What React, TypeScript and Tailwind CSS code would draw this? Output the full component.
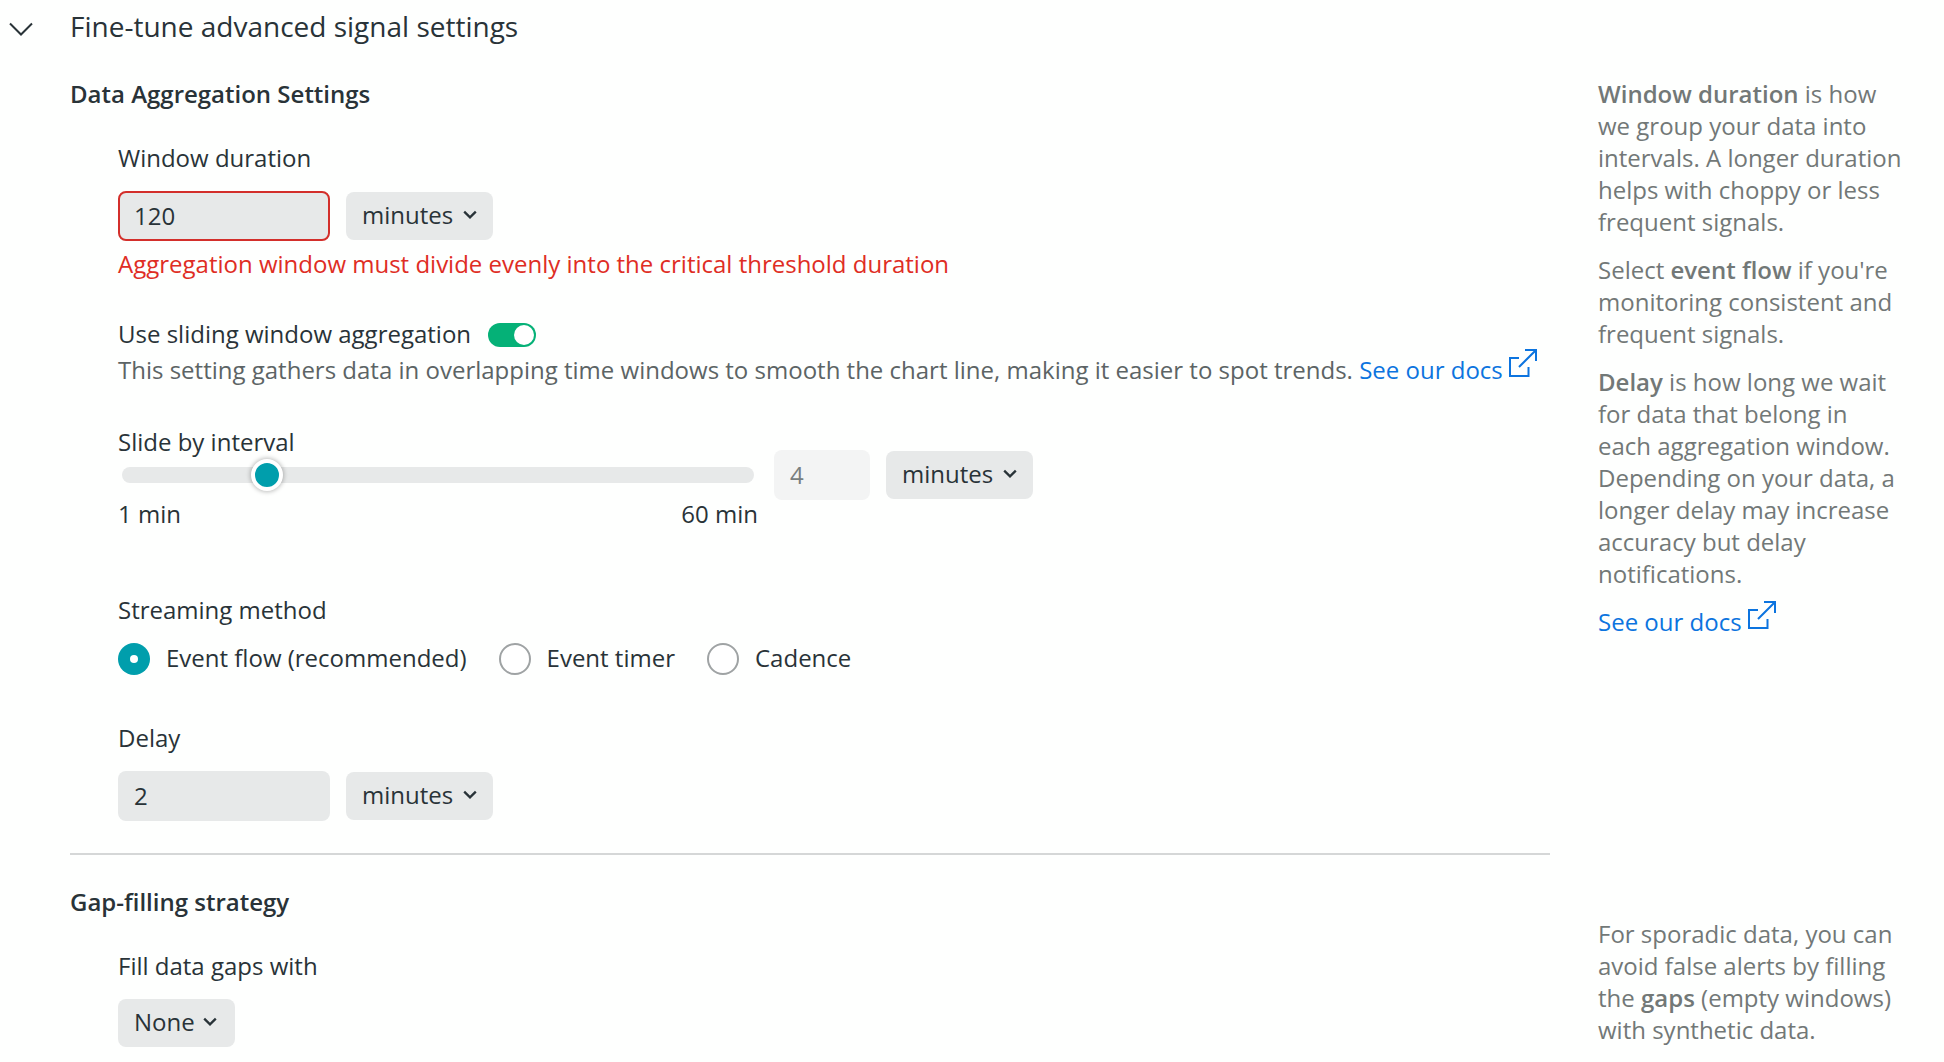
import type { ReactNode } from "react";

function Chevron() {
  return (
    <svg className="block h-[10px] w-[14px] shrink-0" viewBox="0 0 14 10" fill="none">
      <path d="M1.2 1.6L7 7.4L12.8 1.6" stroke="#293338" strokeWidth="2.3" />
    </svg>
  );
}

function Select({ label, size }: { label: string; size: string }) {
  return (
    <button className={`flex h-12 items-center justify-between rounded-lg bg-[#e7e9e9] pb-[2px] pl-4 ${size}`}>
      <span>{label}</span>
      <span className="-mt-px">
        <Chevron />
      </span>
    </button>
  );
}

function DocsLink() {
  return (
    <a className="inline-flex h-8 text-[#0c74df]">
      See our docs
      <svg className="-mt-[5px] ml-[6px] block h-[28px] w-[28px]" viewBox="0 0 28 28" fill="none" stroke="#0c74df" strokeWidth="2">
        <path d="M10 9H1V27H19.5V18" />
        <path d="M16 1H27V12M26.8 1.2L10 18" />
      </svg>
    </a>
  );
}

function Field({ label, children, className }: { label: string; children: ReactNode; className: string }) {
  return (
    <div className={className}>
      <div>{label}</div>
      {children}
    </div>
  );
}

function Radio({ label, checked }: { label: string; checked?: boolean }) {
  return (
    <label className="flex items-center gap-4">
      {checked ? (
        <span className="mt-px flex size-8 items-center justify-center rounded-full bg-[#009eac]">
          <span className="size-2 rounded-full bg-white" />
        </span>
      ) : (
        <span className="mt-px size-8 rounded-full border-2 border-[#9fa3a4] bg-white" />
      )}
      <span>{label}</span>
    </label>
  );
}

export default function App() {
  return (
    <div className="h-[1062px] w-[1944px] overflow-hidden bg-[#fefffe] font-['Open_Sans',sans-serif] text-2xl leading-8 text-[#293338] antialiased">
      <header className="flex h-[78px] items-start pt-[6px] pl-[9px]">
        <svg className="mt-4 block h-4 w-6" viewBox="0 0 24 16" fill="none">
          <path d="M1 1.5L12 12.5L23 1.5" stroke="#293338" strokeWidth="2" />
        </svg>
        <h1 className="ml-[37px] text-[28px] leading-10">Fine-tune advanced signal settings</h1>
      </header>

      <div className="flex pl-[70px]">
        <main className="w-[1480px]">
          <section className="h-[775px]">
            <h2 className="font-semibold">Data Aggregation Settings</h2>
            <div className="pl-12">
              <Field label="Window duration" className="pt-8">
                <div className="mt-[17px] flex items-center gap-4">
                  <div className="flex h-[50px] w-[212px] items-center rounded-lg border-2 border-[#d32f2b] bg-[#e7e9e9] pb-px pl-[14px]">120</div>
                  <Select label="minutes" size="w-[147px] pr-4" />
                </div>
                <p className="mt-[7px] text-[#df2d24]">Aggregation window must divide evenly into the critical threshold duration</p>
              </Field>

              <div className="mt-[38px] flex items-center gap-[17px]">
                <span>Use sliding window aggregation</span>
                <span className="mt-px flex h-6 w-12 items-center justify-end rounded-full bg-[#05b177] pr-[2px]">
                  <span className="size-5 rounded-full bg-white" />
                </span>
              </div>
              <p className="mt-1 flex text-[#5c6465]">
                <span className="whitespace-pre">This setting gathers data in overlapping time windows to smooth the chart line, making it easier to spot trends. </span>
                <DocsLink />
              </p>

              <div className="mt-10 flex">
                <div className="w-[640px]">
                  <div>Slide by interval</div>
                  <div className="relative mt-[9px] ml-1 h-4 w-[632px] rounded-full bg-[#e7e9e9]">
                    <span className="absolute -top-2 left-[129px] size-8 rounded-full border-4 border-white bg-[#009eac] shadow-[0_0_4px_1px_rgba(0,0,0,0.25)]" />
                  </div>
                  <div className="mt-[15px] flex justify-between">
                    <span>1 min</span>
                    <span>60 min</span>
                  </div>
                </div>
                <div className="mt-6 ml-4 flex h-[50px] items-center gap-4">
                  <div className="flex h-[50px] w-24 items-center rounded-lg bg-[#f3f4f4] pl-4 text-[#797f80]">4</div>
                  <Select label="minutes" size="w-[147px] pr-4" />
                </div>
              </div>

              <Field label="Streaming method" className="mt-16">
                <div className="mt-4 flex h-8 items-center gap-8">
                  <Radio label="Event flow (recommended)" checked />
                  <Radio label="Event timer" />
                  <Radio label="Cadence" />
                </div>
              </Field>

              <Field label="Delay" className="mt-12">
                <div className="mt-[17px] flex items-center gap-4">
                  <div className="flex h-[50px] w-[212px] items-center rounded-lg bg-[#e7e9e9] pb-px pl-4">2</div>
                  <Select label="minutes" size="w-[147px] pr-4" />
                </div>
              </Field>
            </div>
          </section>

          <section className="border-t-2 border-[#d5d7d7] pt-[31px]">
            <h2 className="font-semibold">Gap-filling strategy</h2>
            <Field label="Fill data gaps with" className="mt-8 pl-12">
              <div className="mt-[17px] flex">
                <Select label="None" size="w-[117px] pr-[18px]" />
              </div>
            </Field>
          </section>
        </main>

        <aside className="ml-12 w-[306px] text-[#727877]">
          <div className="flex h-[840px] flex-col gap-4">
            <p><b className="font-semibold">Window duration</b> is how we group your data into intervals. A longer duration helps with choppy or less frequent signals.</p>
            <p>Select <b className="font-semibold">event flow</b> if you're monitoring consistent and frequent signals.</p>
            <p><b className="font-semibold">Delay</b> is how long we wait for data that belong in each aggregation window. Depending on your data, a longer delay may increase accuracy but delay notifications.</p>
            <DocsLink />
          </div>
          <p>For sporadic data, you can avoid false alerts by filling the <b className="font-semibold">gaps</b> (empty windows) with synthetic data.</p>
        </aside>
      </div>
    </div>
  );
}
